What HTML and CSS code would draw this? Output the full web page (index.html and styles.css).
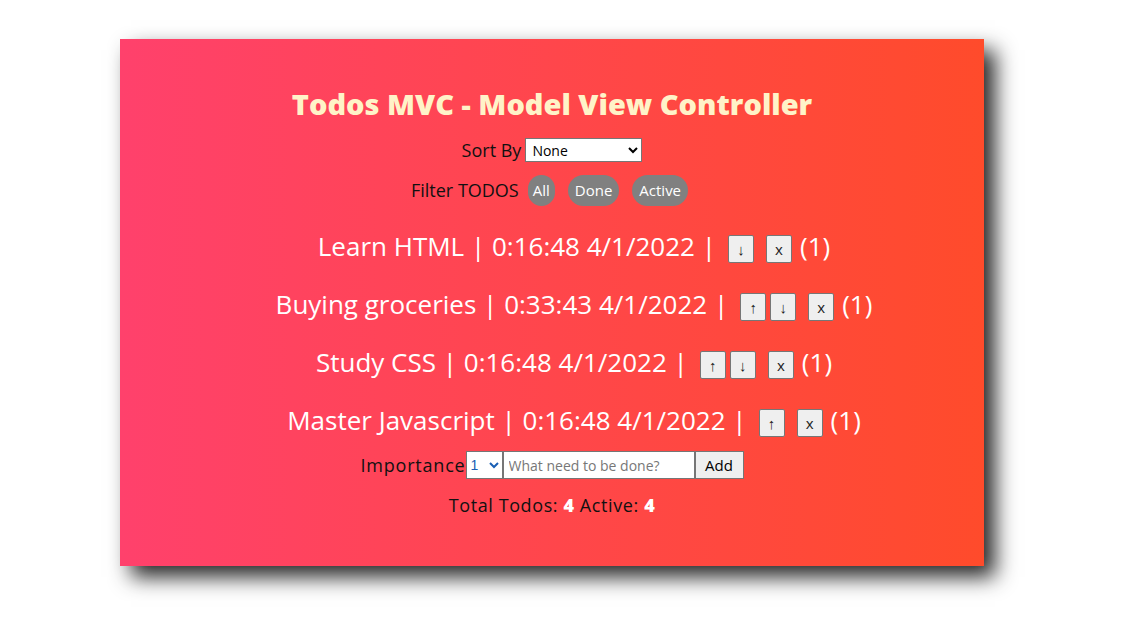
FILE: index.html
```html
<!DOCTYPE html>
<html>
<head>
<meta charset="utf-8">
<link rel="stylesheet" href="styles.css">
</head>
<body>
<div class="card">
  <h1 class="title">Todos MVC - Model View Controller</h1>
  <div class="sort">
    <span>Sort By</span>
    <select class="sort-select"><option>None</option></select>
  </div>
  <div class="filter">
    <span class="filter-label">Filter TODOS</span>
    <button class="pill pill-all">All</button>
    <button class="pill">Done</button>
    <button class="pill">Active</button>
  </div>
  <ul class="todos">
    <li class="todo"><span>Learn HTML | 0:16:48 4/1/2022 |</span><span class="ctrls"><button class="sbtn">↓</button></span><button class="sbtn xbtn">x</button><span>(1)</span></li>
    <li class="todo"><span>Buying groceries | 0:33:43 4/1/2022 |</span><span class="ctrls"><button class="sbtn">↑</button><button class="sbtn">↓</button></span><button class="sbtn xbtn">x</button><span>(1)</span></li>
    <li class="todo"><span>Study CSS | 0:16:48 4/1/2022 |</span><span class="ctrls"><button class="sbtn">↑</button><button class="sbtn">↓</button></span><button class="sbtn xbtn">x</button><span>(1)</span></li>
    <li class="todo"><span>Master Javascript | 0:16:48 4/1/2022 |</span><span class="ctrls"><button class="sbtn">↑</button></span><button class="sbtn xbtn">x</button><span>(1)</span></li>
  </ul>
  <form class="add">
    <span class="imp-label">Importance</span><select class="imp"><option>1</option></select><input class="what" placeholder="What need to be done?"><button type="button" class="addbtn">Add</button>
  </form>
  <div class="total">Total Todos: <b>4</b> Active: <b>4</b></div>
</div>
</body>
</html>
```
FILE: styles.css
```css
html, body { margin: 0; padding: 0; background: #fff; }
body { font-family: "Open Sans", sans-serif; padding: 39px 0 72px 120px; min-height: 638px; box-sizing: border-box; }
.card {
  width: 864px;
  height: 527px;
  box-sizing: border-box;
  background: linear-gradient(to right, #ff416c, #ff4b2b);
  box-shadow: 11px 11px 20px rgba(0, 0, 0, 0.85);
  display: flex;
  flex-direction: column;
  align-items: center;
  padding-top: 45px;
  color: #111;
}
.title {
  margin: 0;
  font-size: 29px;
  line-height: 40px;
  font-weight: 800;
  color: #fff3c8;
}
.sort { margin-top: 13px; display: flex; align-items: center; gap: 4px; font-size: 18px; height: 26px; }
.sort-select { width: 117px; height: 24px; font-size: 14px; font-family: "Open Sans", sans-serif; border: 1px solid #767676; background: #fff; color: #000; padding: 0 2px; }
.filter { margin-top: 11px; display: flex; align-items: center; font-size: 18px; height: 32px; padding-left: 8px; }
.filter-label { margin-right: 9px; }
.pill {
  background: #808080; color: #fff; border: none; border-radius: 16px;
  height: 31px; padding: 0 7px; margin-right: 13px; font-family: "Open Sans", sans-serif; font-size: 15px; font-weight: 500;
}
.pill-all { padding: 0 5px; }
.todos { list-style: none; margin: 11px 0 0; padding: 0 0 0 44px; }
.todo {
  display: flex; align-items: center; justify-content: center;
  height: 58px; font-size: 26px; color: #fff;
}
.ctrls { display: flex; gap: 4px; margin-left: 12px; }
.sbtn {
  width: 26px; height: 28px; padding: 0; margin-top: 6px;
  background: #efefef; border: 1px solid #767676; border-radius: 2px;
  font-size: 15px; color: #222; font-family: "Open Sans", sans-serif;
}
.xbtn { margin-left: 12px; margin-right: 8px; }
.add { margin: 2px 0 0; display: flex; align-items: center; font-size: 18px; height: 28px; }
.imp-label { letter-spacing: 0.8px; }
.imp { width: 37px; height: 28px; font-size: 14px; border: 1px solid #767676; background: #fff; color: #1a5fb4; padding: 0; }
.what { width: 192px; height: 28px; box-sizing: border-box; border: 1px solid #767676; font-family: "Open Sans", sans-serif; font-size: 14px; padding: 0 5px; }
.what::placeholder { color: #777; }
.addbtn { height: 28px; width: 49px; background: #efefef; border: 1px solid #767676; font-family: "Open Sans", sans-serif; font-size: 15px; color: #000; }
.total { margin-top: 14px; font-size: 18px; letter-spacing: 0.6px; }
.total b { color: #fff; font-weight: 800; }
```
